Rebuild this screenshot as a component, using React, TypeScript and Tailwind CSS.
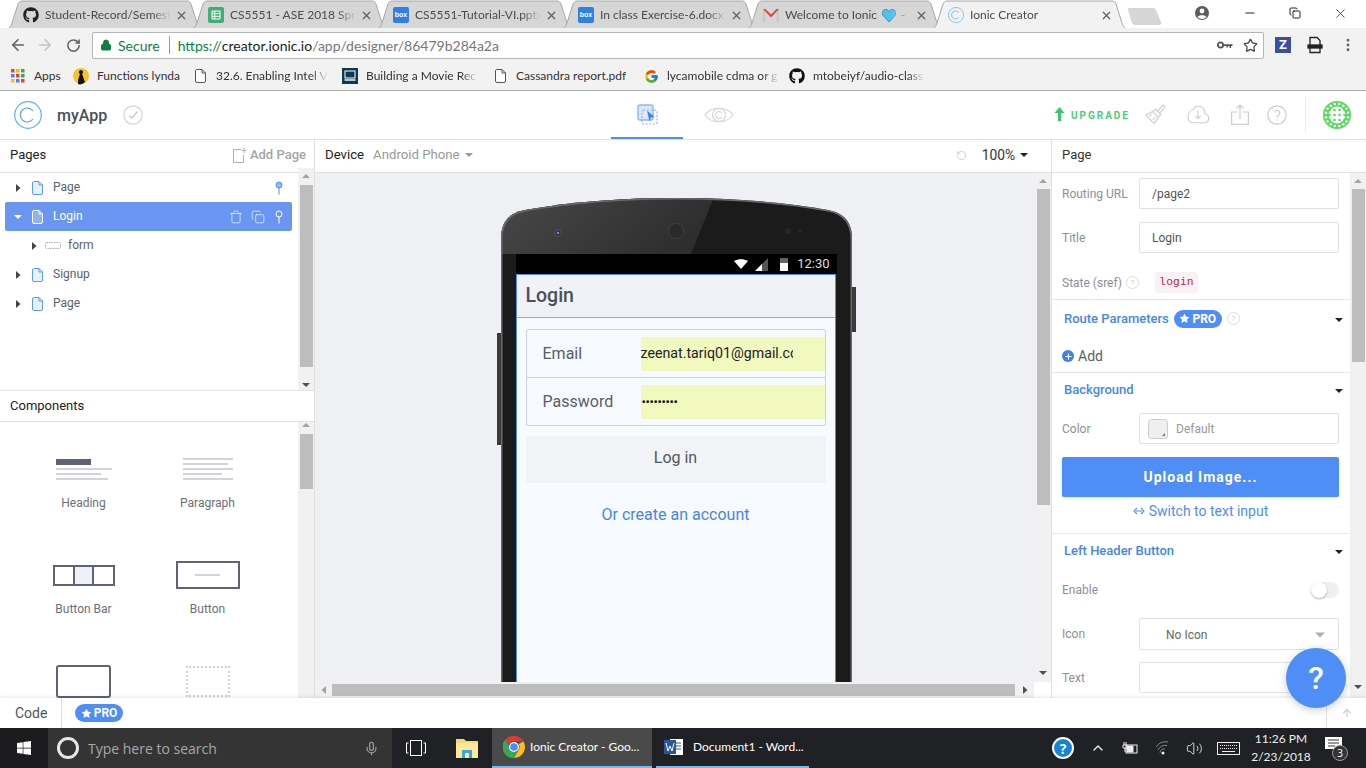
import React from "react";
import { ArrowLeft, ArrowRight, RotateCw, Lock, Star, X, Minus, Copy, MoreVertical, Trash, Mic, ChevronUp, Volume2, Plus, ArrowUp, RotateCcw } from "lucide-react";
import { FaGithub, FaWindows } from "react-icons/fa";
import { FcGoogle } from "react-icons/fc";

const Doc = ({ c = "#5b9af5", f = "#e6f0fe" }: { c?: string; f?: string }) => (
  <svg width="11" height="14" viewBox="0 0 11 14" fill={f} stroke={c} strokeWidth="1"><path d="M1.5 .5H7L10.5 4V12A1.5 1.5 0 0 1 9 13.5H2A1.5 1.5 0 0 1 .5 12V2A1.5 1.5 0 0 1 1.5 .5Z" /><path d="M7 .5V4H10.5" fill="none" /></svg>
);
const Tri = ({ d = "r", c = "#444", s = 8 }: { d?: string; c?: string; s?: number }) => (
  <svg width={s} height={s} viewBox="0 0 8 8" fill={c}>
    {d === "r" && <path d="M2 0L6.5 4L2 8Z" />}
    {d === "d" && <path d="M0 2H8L4 6Z" />}
    {d === "u" && <path d="M0 6H8L4 2Z" />}
    {d === "l" && <path d="M6 0L1.5 4L6 8Z" />}
  </svg>
);
const Pin = ({ c, f }: { c: string; f: string }) => (
  <svg width="8" height="14" viewBox="0 0 8 14" fill={f} stroke={c} strokeWidth="1"><circle cx="4" cy="4" r="3" /><path d="M4 7V13.5" /></svg>
);
const Help = ({ s = 13 }: { s?: number }) => (
  <span className="inline-flex items-center justify-center rounded-full border border-[#ddd] text-[#ccc] text-[8px] shrink-0" style={{ width: s, height: s }}>?</span>
);
const ProPill = () => (
  <span className="inline-flex items-center justify-center gap-[2px] w-[48px] h-[18px] rounded-full bg-[#4f8ef7] text-white text-[12px] font-bold"><Star size={11} fill="white" strokeWidth={0} />PRO</span>
);
const VScroll = ({ top, h, bot = 16, className = "" }: { top: number; h: number; bot?: number; className?: string }) => (
  <div className={`w-[16px] bg-[#f1f1f1] flex flex-col items-center shrink-0 ${className}`}>
    <div className="h-[16px] flex items-center justify-center shrink-0"><Tri d="u" c="#a3a3a3" /></div>
    <div className="w-[13px] bg-[#bdbdbd] shrink-0" style={{ marginTop: top, height: h }} />
    <div className="flex-1" />
    {bot > 0 && <div className="flex items-start justify-center shrink-0" style={{ height: bot }}><Tri d="d" c="#505050" /></div>}
  </div>
);

function BoxIcon() {
  return <span className="w-[16px] h-[16px] rounded-[2px] bg-[#2f7fe6] text-white text-[7px] font-bold flex items-center justify-center font-['Liberation_Sans',sans-serif]">box</span>;
}
const tabs = [
  { t: "Student-Record/Semest", i: <FaGithub size={16} color="#222" /> },
  { t: "CS5551 - ASE 2018 Spri", i: <svg width="16" height="16" viewBox="0 0 16 16"><rect width="16" height="16" rx="2" fill="#3fae78" /><path d="M4 4H12V12H4ZM4 6.6H12M4 9.3H12M6.8 4V12" fill="none" stroke="#fff" /></svg> },
  { t: "CS5551-Tutorial-VI.pptx", i: <BoxIcon /> },
  { t: "In class Exercise-6.docx", i: <BoxIcon /> },
  { t: "Welcome to Ionic", i: <svg width="16" height="14" viewBox="0 0 16 14"><path d="M0 1H2.5V14H0ZM13.5 1H16V14H13.5Z" fill="#c9c9c9" /><path d="M0 1H2.5L8 6.5L13.5 1H16L8 9.5Z" fill="#d9473b" /></svg> },
];
const IonicC = ({ s = 28 }: { s?: number }) => (
  <svg width={s} height={s} viewBox="0 0 28 28" fill="none"><circle cx="14" cy="14" r="13.3" stroke="#55b4f5" strokeWidth="1.2" /><path d="M19 10A7 7 0 1 0 19 18" stroke="#6a9ff0" strokeWidth="1.2" /></svg>
);
const TabShape = ({ w, f, s }: { w: number; f: string; s: string }) => (
  <svg className="absolute inset-0" width={w} height="29" viewBox={`0 0 ${w} 29`}>
    <path d={`M0 29C5 29 6 26 7 23L13 4C14 2 15 1 17 1H${w - 17}C${w - 15} 1 ${w - 14} 2 ${w - 13} 4L${w - 7} 23C${w - 6} 26 ${w - 5} 29 ${w} 29Z`} fill={f} stroke={s} />
  </svg>
);
const Tab = ({ t, i, active, heart, z }: { t: string; i: React.ReactNode; active?: boolean; heart?: boolean; z: number }) => (
  <div className="relative w-[199px] h-[29px] -mr-[14px] shrink-0" style={{ zIndex: z }}>
    <TabShape w={199} f={active ? "#f2f2f2" : "#d6d6d6"} s="#a8a8a8" />
    <div className="relative flex items-center h-[28px] pl-[18px] pr-[14px] pt-[2px]">
      <span className="w-[16px] h-[16px] flex items-center justify-center shrink-0">{i}</span>
      <span className="ml-[6px] w-[126px] whitespace-nowrap overflow-hidden text-[12px] text-[#4a4a4a] flex items-center [mask-image:linear-gradient(to_right,black_85%,transparent)]">
        {t}
        {heart && <svg className="mx-[5px] shrink-0" width="14" height="13" viewBox="0 0 14 13"><path d="M7 13L1 6.5C-1 3 2-1 5 .6C6 1 7 2.5 7 2.5S8 1 9 .6C12-1 15 3 13 6.5Z" fill="#4fc3f0" stroke="#1d6f8f" strokeWidth=".6" /></svg>}
        {heart && " -"}
      </span>
      <span className="flex-1" />
      <X size={13} color="#5f5f5f" strokeWidth={2.2} className="mr-[2px]" />
    </div>
  </div>
);

const bookmarks: [React.ReactNode, string, number, number][] = [
  [<svg width="14" height="14" viewBox="0 0 14 14">{[0, 1, 2].map((r) => [0, 1, 2].map((c) => <rect key={`${r}${c}`} x={c * 5} y={r * 5} width="3.5" height="3.5" fill={["#e94335", "#fbbc05", "#34a853", "#4285f4", "#e94335", "#34a853", "#fbbc05", "#4285f4", "#e94335"][r * 3 + c]} />))}</svg>, "Apps", 63, 0],
  [<svg width="16" height="18" viewBox="0 0 16 18"><circle cx="8" cy="9" r="8" fill="#f3c623" /><path d="M5 17C5 12 6 10 7 7C5 6 6 3 8 3C10 3 11 6 9 7C10 9 11 13 12 15C10 17 7 18 5 17Z" fill="#111" /></svg>, "Functions lynda", 119, 0],
  [<Doc c="#555" f="#fff" />, "32.6. Enabling Intel V", 150, 1],
  [<svg width="16" height="16" viewBox="0 0 16 16"><rect width="16" height="16" fill="#0e3a4f" /><rect x="3" y="3" width="10" height="7" fill="none" stroke="#fff" /><path d="M2.5 12H13.5" stroke="#fff" strokeWidth="1.4" /></svg>, "Building a Movie Rec", 150, 1],
  [<Doc c="#555" f="#fff" />, "Cassandra report.pdf", 151, 0],
  [<FcGoogle size={15} />, "lycamobile cdma or g", 146, 1],
  [<FaGithub size={16} color="#111" />, "mtobeiyf/audio-class", 136, 1],
];

const Row = ({ label, sel, ind, pin, icon }: { label: string; sel?: boolean; ind?: boolean; pin?: boolean; icon?: React.ReactNode }) => (
  <div className={`h-[29px] flex items-center rounded-[2px] text-[12px] ${sel ? "bg-[#6a96f2] text-white" : "text-[#5b6070]"}`}>
    <span className={`flex justify-center shrink-0 ${ind ? "w-[40px] pl-[18px]" : "w-[27px] pr-[2px]"}`}>
      <Tri d={sel ? "d" : "r"} c={sel ? "#fff" : "#444"} />
    </span>
    {icon ?? <Doc c={sel ? "#fff" : "#5b9af5"} f={sel ? "#8fb1f6" : "#e6f0fe"} />}
    <span className={`pb-[2px] ${ind ? "ml-[7px]" : "ml-[10px]"}`}>{label}</span>
    <span className="flex-1" />
    {sel && (
      <>
        <Trash size={14} color="#fff" strokeWidth={1.1} className="mr-[8px]" />
        <Copy size={14} color="#fff" strokeWidth={1.1} className="mr-[10px]" />
      </>
    )}
    {(pin || sel) && <span className="mr-[9px] flex"><Pin c={sel ? "#fff" : "#4f8ef7"} f={sel ? "transparent" : "#8fbaf8"} /></span>}
  </div>
);

const Comp = ({ label, children }: { label: string; children: React.ReactNode }) => (
  <div className="h-[106px] flex flex-col items-center">
    <div className="h-[44px] flex items-center justify-center">{children}</div>
    <div className="mt-[4px] text-[12px] text-[#6b6f7b] leading-[16px]">{label}</div>
  </div>
);

const Label = ({ children }: { children: React.ReactNode }) => <span className="w-[77px] shrink-0 text-[12px] text-[#8b8f98] whitespace-nowrap">{children}</span>;
const Input = ({ children, h = 31 }: { children?: React.ReactNode; h?: number }) => (
  <div className="w-[200px] border border-[#dde1e8] rounded-[2px] flex items-center pl-[12px] text-[12px] text-[#555] bg-white" style={{ height: h }}>{children}</div>
);
const SectionHead = ({ children, extra, h = 33 }: { children: React.ReactNode; extra?: React.ReactNode; h?: number }) => (
  <div className="flex items-center pl-[12px] pr-[7px]" style={{ height: h }}>
    <span className="text-[13px] font-medium text-[#4585f0]">{children}</span>
    {extra}
    <span className="flex-1" />
    <span className="mt-[3px] flex"><Tri d="d" c="#222" /></span>
  </div>
);

const PhoneShell = () => (
  <svg className="absolute left-0 top-0 overflow-visible" width="351" height="600" viewBox="0 0 351 600">
    <defs>
      <clipPath id="body"><path d="M0 600V42C0 25 8 16 24 13C75 4 125 1 175.5 1C226 1 276 4 327 13C343 16 351 25 351 42V600Z" /></clipPath>
      <linearGradient id="glare" x1="0" y1="0" x2="1" y2="0.3"><stop offset="0" stopColor="#484848" /><stop offset="1" stopColor="#2e2e2e" /></linearGradient>
    </defs>
    <rect x="-4" y="136" width="5" height="112" fill="#3a3a3a" />
    <rect x="350" y="90" width="5" height="45" fill="#3a3a3a" />
    <path d="M0 600V42C0 25 8 16 24 13C75 4 125 1 175.5 1C226 1 276 4 327 13C343 16 351 25 351 42V600Z" fill="#1b1b1b" />
    <g clipPath="url(#body)">
      <path d="M0 0H213L190 57H0Z" fill="url(#glare)" />
      <path d="M0 600V42C0 25 8 16 24 13C75 4 125 1 175.5 1C226 1 276 4 327 13C343 16 351 25 351 42V600" fill="none" stroke="#6a6a6a" strokeWidth="3" />
    </g>
    <circle cx="57" cy="36" r="3.5" fill="#2e2e50" stroke="#555" />
    <circle cx="57" cy="36" r="1.2" fill="#8a8ac8" />
    <circle cx="175" cy="34" r="7.5" fill="#2a2a2a" stroke="#555" strokeDasharray="1 1" />
    <circle cx="287" cy="34" r="3" fill="#262626" />
    <circle cx="299" cy="34" r="2" fill="#262626" />
  </svg>
);

const GreenLogo = () => {
  const dots: React.ReactNode[] = [];
  dots.push(<circle key="ring" cx="14" cy="14" r="11.2" fill="none" stroke="#55dc5c" strokeWidth="5.6" />);
  for (let i = 0; i < 16; i++) {
    const a = ((i + 0.5) / 16) * Math.PI * 2;
    dots.push(<circle key={i} cx={14 + Math.cos(a) * 11.2} cy={14 + Math.sin(a) * 11.2} r="1.3" fill="#fff" />);
  }
  for (let r = 0; r < 3; r++) for (let c = 0; c < 4; c++) dots.push(<circle key={`d${r}${c}`} cx={6.5 + c * 5} cy={9 + r * 5} r="1.3" fill="#55dc5c" />);
  return <svg width="28" height="28" viewBox="0 0 28 28">{dots}</svg>;
};

const ChromeIcon = ({ s = 22 }: { s?: number }) => (
  <svg width={s} height={s} viewBox="0 0 22 22">
    <path d="M11 0A11 11 0 0 1 20.5 5.5H11A5.5 5.5 0 0 0 6 8.5L2.5 3.5A11 11 0 0 1 11 0Z" fill="#e33b2e" />
    <path d="M20.5 5.5A11 11 0 0 1 11 22L15.7 13.8A5.5 5.5 0 0 0 15.7 8Z" fill="#fbc116" />
    <path d="M2.5 3.5L7 11.5A5 5 0 0 0 14.5 15L11 22A11 11 0 0 1 2.5 3.5Z" fill="#3aa757" />
    <circle cx="11" cy="11" r="5" fill="#fff" /><circle cx="11" cy="11" r="3.8" fill="#4b8bf5" />
  </svg>
);

export default function App() {
  return (
    <div className="w-[1366px] h-[768px] overflow-hidden flex flex-col bg-white font-['Roboto',sans-serif] relative">
      {/* tab strip */}
      <div className="h-[28px] bg-white flex shrink-0 relative font-['Lato',sans-serif]">
        <div className="absolute left-0 right-0 top-[28px] h-px bg-[#a8a8a8] z-0" />
        <div className="flex pl-[5px] relative z-10">
          {tabs.map((t, i) => (
            <Tab key={t.t} t={t.t} i={t.i} heart={i === 4} z={i + 1} />
          ))}
          <Tab t="Ionic Creator" i={<IonicC s={16} />} active z={9} />
          <div className="relative z-0 ml-[12px] mt-[6px]">
            <svg width="36" height="20" viewBox="0 0 36 20"><path d="M2 2H26Q28 2 29 4L34 16Q35 19 32 19H8Q6 19 5 17L1 4Q.5 2 2 2Z" fill="#d6d6d6" /></svg>
          </div>
        </div>
        <div className="flex-1" />
        <div className="flex items-center h-[28px] pb-[2px] relative z-10">
          <svg className="mr-[34px]" width="14" height="14" viewBox="0 0 14 14"><circle cx="7" cy="7" r="7" fill="#5c5c5c" /><circle cx="7" cy="5" r="2.4" fill="#fff" /><path d="M2.5 11C3.5 8.5 10.5 8.5 11.5 11A6 6 0 0 1 2.5 11Z" fill="#fff" /></svg>
          <Minus size={14} color="#222" className="mr-[32px]" />
          <Copy size={12} color="#222" className="mr-[32px]" />
          <X size={15} color="#222" strokeWidth={1.2} className="mr-[18px]" />
        </div>
      </div>
      {/* toolbar */}
      <div className="h-[34px] bg-[#f2f2f2] flex items-center shrink-0 relative z-20">
        <ArrowLeft size={18} color="#5f6368" className="ml-[9px]" strokeWidth={2.2} />
        <ArrowRight size={18} color="#c4c4c4" className="ml-[9px]" strokeWidth={2.2} />
        <RotateCw size={15} color="#5f6368" className="ml-[12px]" strokeWidth={2.4} />
        <div className="ml-[11px] w-[1172px] h-[27px] bg-white border border-[#b5b5b5] rounded-[2px] flex items-center text-[14px] font-['Lato',sans-serif]">
          <Lock size={12} color="#0b8043" fill="#0b8043" className="ml-[7px]" />
          <span className="ml-[6px] text-[#0b8043]">Secure</span>
          <span className="ml-[9px] w-px h-[18px] bg-[#999]" />
          <span className="ml-[8px] text-[#0b8043]">https://</span>
          <span className="text-[#222]">creator.ionic.io</span>
          <span className="text-[#777]">/app/designer/86479b284a2a</span>
          <span className="flex-1" />
          <svg className="mr-[10px]" width="16" height="8" viewBox="0 0 16 8" fill="none"><circle cx="3.5" cy="4" r="2.6" stroke="#555" strokeWidth="1.8" /><path d="M6 3.2H15.5V5H14V7H12.500V5H11V6.500H9.500V5H6Z" fill="#555" /></svg>
          <Star size={15} color="#444" className="mr-[5px]" />
        </div>
        <div className="ml-[11px] w-[16px] h-[16px] bg-[#3b4ea0] text-white text-[13px] font-bold flex items-center justify-center">Z</div>
        <svg className="ml-[16px]" width="16" height="18" viewBox="0 0 16 18" fill="none" stroke="#222" strokeWidth="1.3"><path d="M3 16.500V1.500H10L13 4.500V16.500Z" /><rect x="1" y="9" width="14" height="3" fill="#222" /></svg>
        <MoreVertical size={16} color="#666" className="ml-[17px]" strokeWidth={2.4} />
      </div>
      {/* bookmarks */}
      <div className="h-[28px] bg-[#f2f2f2] flex items-center shrink-0 pl-[10px] text-[12px] text-[#333] font-['Lato',sans-serif]">
        {bookmarks.map(([ic, t, w, fade]) => (
          <div key={t} className="flex items-center shrink-0" style={{ width: w }}>
            <span className="w-[16px] flex justify-center shrink-0">{ic}</span>
            <span className={`ml-[8px] whitespace-nowrap overflow-hidden ${fade ? "w-[112px] [mask-image:linear-gradient(to_right,black_85%,transparent)]" : ""}`}>{t}</span>
          </div>
        ))}
      </div>
      <div className="h-px bg-[#b0b0b0] shrink-0" />
      {/* app header */}
      <div className="h-[49px] border-b border-[#e0e0e0] flex items-center shrink-0 bg-white relative">
        <span className="ml-[14px] flex"><IonicC /></span>
        <span className="ml-[15px] pt-[2px] text-[16px] font-medium text-[#4a4f5c] w-[51px]">myApp</span>
        <svg className="ml-[15px]" width="20" height="20" viewBox="0 0 20 20" fill="none" stroke="#d4d4d4" strokeWidth="1.2"><circle cx="10" cy="10" r="9.2" /><path d="M6 10.5L9 13L14.5 6.5" stroke="#c4c4c4" /></svg>
        <div className="ml-[468px] w-[72px] h-[48px] border-b-2 border-[#4d8ef8] flex items-center justify-center">
          <svg width="21" height="21" viewBox="0 0 21 21"><rect x="1" y="1" width="15" height="15" rx="2" fill="#dbe8fd" stroke="#8fb6f6" strokeWidth="1.4" /><rect x="5" y="6" width="15" height="14" rx="1.500" fill="none" stroke="#8fb6f6" strokeWidth="1.2" strokeDasharray="2 1.500" /><path d="M10 6.500L17.500 13L14 13.500L12.500 17.500Z" fill="#3d84f2" /></svg>
        </div>
        <svg className="ml-[21px]" width="30" height="20" viewBox="0 0 30 20" fill="none" stroke="#d4d4d4" strokeWidth="1.1"><path d="M1 10C7 1 23 1 29 10C23 19 7 19 1 10Z" /><circle cx="15" cy="10" r="6.500" /><path d="M18 8A3.500 3.500 0 1 0 18 12" /></svg>
        <span className="flex-1" />
        <svg className="-mt-[2px]" width="11" height="14" viewBox="0 0 11 14" fill="#38c96a"><path d="M5.500 0L10.500 6H7V14H4V6H.5Z" /></svg>
        <span className="ml-[6px] text-[10px] font-bold tracking-[2px] text-[#45d07a]">UPGRADE</span>
        <svg className="ml-[14px] -mt-[2px]" width="23" height="22" viewBox="0 0 24 23" fill="none" stroke="#cdcdcd" strokeWidth="1.2"><path d="M14 9L19.500 2.500C20.500 1.500 22.500 3 21.500 4.500L16 11" /><path d="M12 6.500L17.500 12L15 15L9 9Z" /><path d="M9 9L2 12.500L10.500 21.500L15 15M6 14L8 11.500M9.500 18L11.500 15" /></svg>
        <svg className="ml-[19px] -mt-[3px]" width="24" height="21" viewBox="0 0 26 22" fill="none" stroke="#cdcdcd" strokeWidth="1.2"><path d="M7 21H20C26 21 26 12 20.500 11.500C21 3 10 0 8 7C1 7 0 21 7 21Z" /><path d="M13 8V16.500M10 13.500L13 16.500L16 13.500" /></svg>
        <svg className="ml-[21px] -mt-[2px]" width="18" height="21" viewBox="0 0 18 21" fill="none" stroke="#cdcdcd" strokeWidth="1.2"><path d="M6 8H.6V20.400H17.400V8H12" /><path d="M9 15V1M5.500 4.500L9 1L12.500 4.500" /></svg>
        <svg className="ml-[18px] -mt-[1px]" width="20" height="20" viewBox="0 0 20 20" fill="none" stroke="#cdcdcd" strokeWidth="1.2"><circle cx="10" cy="10" r="9.200" /><path d="M7.500 7.500C8 4.500 13 5 12.800 8C12.600 10 10 10 10 12.500M10 14.500V15.500" /></svg>
        <span className="ml-[18px] w-px h-[36px] bg-[#eee]" />
        <span className="ml-[17px] mr-[15px] flex"><GreenLogo /></span>
      </div>
      {/* main */}
      <div className="h-[558px] flex shrink-0 overflow-hidden">
        {/* left */}
        <div className="w-[315px] border-r border-[#e0e0e0] flex flex-col shrink-0">
          <div className="h-[33px] border-b border-[#e2e2e2] flex items-center pl-[10px] pr-[8px] pb-[2px] shrink-0">
            <span className="text-[13px] text-[#222]">Pages</span>
            <span className="flex-1" />
            <svg width="15" height="15" viewBox="0 0 15 15" fill="none" stroke="#b0b0b0"><path d="M9 1.500H1.500V14.500H11.500V7M12 0V5M9.500 2.500H14.500" /></svg>
            <span className="ml-[3px] text-[13px] font-medium text-[#a6a6a6]">Add Page</span>
          </div>
          <div className="h-[217px] flex shrink-0">
            <div className="w-[298px] pl-[5px] pr-[6px]">
              <Row label="Page" pin />
              <Row label="Login" sel />
              <Row label="form" ind icon={<svg width="16" height="7" viewBox="0 0 16 7" fill="none"><rect x=".5" y=".5" width="15" height="6" rx="1" stroke="#aaa" strokeDasharray="1.500 1" /></svg>} />
              <Row label="Signup" />
              <Row label="Page" />
            </div>
            <VScroll top={1} h={182} bot={9} className="-mt-[5px] relative z-10 h-[222px]" />
          </div>
          <div className="h-[32px] border-y border-[#e2e2e2] flex items-center pl-[10px] text-[13px] text-[#222] shrink-0 bg-white relative z-20">Components</div>
          <div className="h-[276px] flex overflow-hidden">
            <div className="w-[298px] overflow-hidden pl-[21px] pt-[25px] grid grid-cols-[125px_123px] content-start">
              <Comp label="Heading">
                <div className="w-[56px] flex flex-col gap-[3px]">
                  <div className="w-[35px] h-[6px] bg-[#5f6373]" />
                  <div className="h-[2px] bg-[#d3d4da]" />
                  <div className="w-[45px] h-[2px] bg-[#d3d4da]" />
                  <div className="w-[52px] h-[2px] bg-[#d3d4da]" />
                </div>
              </Comp>
              <Comp label="Paragraph">
                <div className="w-[50px] flex flex-col gap-[3px]">
                  <div className="h-[2px] bg-[#d3d4da]" />
                  <div className="w-[45px] h-[2px] bg-[#d3d4da]" />
                  <div className="h-[2px] bg-[#d3d4da]" />
                  <div className="w-[39px] h-[2px] bg-[#d3d4da]" />
                  <div className="h-[2px] bg-[#d3d4da]" />
                </div>
              </Comp>
              <Comp label="Button Bar">
                <div className="w-[62px] h-[21px] border-2 border-[#5f6373] flex">
                  <div className="flex-1" />
                  <div className="w-[21px] border-x-2 border-[#5f6373] bg-[#eef0f5]" />
                  <div className="flex-1" />
                </div>
              </Comp>
              <Comp label="Button">
                <div className="w-[64px] h-[28px] border-2 border-[#5f6373] flex items-center justify-center">
                  <div className="w-[25px] h-[2px] bg-[#d3d4da]" />
                </div>
              </Comp>
              <Comp label="Card">
                <div className="w-[55px] h-[33px] border-2 border-[#5f6373] rounded-[3px]" />
              </Comp>
              <Comp label="Container">
                <div className="w-[44px] h-[31px] border-2 border-dotted border-[#cfd0d6]" />
              </Comp>
            </div>
            <VScroll top={1} h={55} bot={0} className="-mt-[5px] relative z-10 h-[281px]" />
          </div>
        </div>
        {/* canvas */}
        <div className="w-[737px] border-r border-[#e0e0e0] flex flex-col shrink-0">
          <div className="h-[33px] border-b border-[#e2e2e2] flex items-center pl-[10px] pb-[2px] shrink-0 text-[13.2px]">
            <span className="text-[#222]">Device</span>
            <span className="ml-[9px] text-[#999]">Android Phone</span>
            <span className="ml-[5px] flex"><Tri d="d" c="#999" /></span>
            <span className="flex-1" />
            <RotateCcw size={11} color="#ccc" />
            <span className="ml-[15px] text-[13.8px] text-[#333]">100%</span>
            <span className="ml-[5px] mr-[23px] flex"><Tri d="d" c="#222" /></span>
          </div>
          <div className="flex-1 flex min-h-0">
            <div className="flex-1 bg-[#eff0f4] overflow-hidden flex justify-center pt-[24px] min-w-0">
              <div className="relative ml-[2px] w-[351px] h-[600px] shrink-0 pt-[57px] pl-[15px]">
                <PhoneShell />
                <div className="relative w-[321px]">
                  <div className="h-[20px] bg-black flex items-center justify-end pr-[7px] text-[#ddd] text-[13px]">
                    <svg width="14" height="10" viewBox="0 0 14 10"><path d="M0 2C4-.5 10-.5 14 2L7 10Z" fill="#fff" /></svg>
                    <svg className="ml-[7px]" width="13" height="13" viewBox="0 0 13 13"><path d="M13 0V13H0Z" fill="#555" /><path d="M7 6V13H0Z" fill="#fff" /></svg>
                    <svg className="ml-[12px]" width="8" height="14" viewBox="0 0 8 14"><rect y="1" width="8" height="13" fill="#666" /><rect y="6" width="8" height="8" fill="#fff" /></svg>
                    <span className="ml-[9px]">12:30</span>
                  </div>
                  <div className="w-[320px] h-[420px] border-t border-x border-[#4d8ef8] bg-[#f7faff]">
                    <div className="h-[43px] bg-[#f0f2f7] border-b border-[#a9abb2] flex items-center pl-[9px] text-[19.5px] font-medium text-[#4c4f58]">Login</div>
                    <div className="px-[9px] pt-[11px]">
                      <div className="h-[97px] border border-[#ced2da] rounded-[2px] flex flex-col text-[16px] text-[#5a5d66]">
                        <div className="h-[48px] border-b border-[#ced2da] flex items-center pl-[16px]">
                          <span className="w-[98px]">Email</span>
                          <div className="flex-1 h-[34px] bg-[#f1f9bf] flex items-center text-[#222] text-[14.2px]">
                            <span className="w-[152px] overflow-hidden whitespace-nowrap">zeenat.tariq01@gmail.com</span>
                          </div>
                        </div>
                        <div className="flex-1 flex items-center pl-[16px]">
                          <span className="w-[98px]">Password</span>
                          <div className="flex-1 h-[34px] bg-[#f1f9bf] flex items-center pl-[1px] text-[#111] text-[13px] tracking-[-0.4px] leading-none">•••••••••</div>
                        </div>
                      </div>
                      <div className="mt-[10px] h-[47px] pb-[3px] bg-[#f1f3f7] rounded-[3px] flex items-center justify-center text-[16px] text-[#53565f]">Log in</div>
                      <div className="mt-[20px] text-center text-[16px] text-[#4585f0]">Or create an account</div>
                    </div>
                  </div>
                </div>
              </div>
            </div>
            <VScroll top={0} h={316} bot={13} className="h-full w-[15px]" />
          </div>
          <div className="h-[16px] flex shrink-0">
            <div className="w-[719px] bg-[#f1f1f1] flex items-center">
              <span className="w-[17px] flex justify-center"><Tri d="l" c="#a3a3a3" /></span>
              <div className="w-[683px] h-[12px] bg-[#bdbdbd]" />
              <span className="flex-1 flex justify-end pr-[5px]"><Tri d="r" c="#505050" /></span>
            </div>
          </div>
        </div>
        {/* right */}
        <div className="flex-1 flex flex-col min-w-0">
          <div className="h-[33px] border-b border-[#e2e2e2] flex items-center pl-[10px] pb-[2px] text-[13px] text-[#333] shrink-0">Page</div>
          <div className="flex-1 flex min-h-0">
            <div className="w-[298px] overflow-hidden">
              <div className="h-[127px] border-b border-[#e8e8e8] pl-[10px] pt-[5px]">
                <div className="flex items-center"><Label>Routing URL</Label><Input>/page2</Input></div>
                <div className="flex items-center mt-[13px]"><Label>Title</Label><Input>Login</Input></div>
                <div className="flex items-center mt-[19px]">
                  <span className="w-[64px] text-[12px] text-[#8b8f98] whitespace-nowrap">State (sref)</span>
                  <Help />
                  <span className="ml-[16px] h-[21px] w-[43px] rounded-[3px] bg-[#f8f2f4] flex items-center justify-center text-[11.3px] text-[#c7254e] font-['DejaVu_Sans_Mono',monospace]">login</span>
                </div>
              </div>
              <div className="h-[73px] border-b border-[#e8e8e8]">
                <SectionHead h={37} extra={<><span className="ml-[5px] flex"><ProPill /></span><span className="ml-[5px] flex"><Help /></span></>}>Route Parameters</SectionHead>
                <div className="mt-[7px] pl-[10px] flex items-center h-[24px] text-[14px] text-[#5a5d66]">
                  <span className="w-[12px] h-[12px] rounded-full bg-[#3b82f0] flex items-center justify-center"><Plus size={9} color="white" strokeWidth={3} /></span>
                  <span className="ml-[4px]">Add</span>
                </div>
              </div>
              <div className="h-[161px] border-b border-[#e8e8e8]">
                <SectionHead>Background</SectionHead>
                <div className="pl-[10px] mt-[7px] flex items-center">
                  <Label>Color</Label>
                  <Input>
                    <svg className="-ml-[4px]" width="20" height="20" viewBox="0 0 20 20"><rect x=".5" y=".5" width="19" height="19" rx="3" fill="#efefef" stroke="#ccc" /><path d="M17 14V17H14Z" fill="#777" /></svg>
                    <span className="ml-[8px] text-[#999]">Default</span>
                  </Input>
                </div>
                <div className="ml-[10px] mt-[13px] w-[277px] h-[40px] rounded-[2px] bg-[#4f8ef7] shadow-sm flex items-center justify-center text-white text-[14px] font-bold tracking-[1px]">Upload Image...</div>
                <div className="h-[28px] flex items-center justify-center text-[14px] text-[#4f8ef7] -ml-[1px]">
                  <svg className="mr-[4px]" width="12" height="10" viewBox="0 0 12 10" fill="none" stroke="#4f8ef7" strokeWidth="1.1"><path d="M4 2L1 5L4 8M8 2L11 5L8 8M3 5H9" /></svg>Switch to text input
                </div>
              </div>
              <SectionHead>Left Header Button</SectionHead>
              <div className="pl-[10px] pr-[11px] mt-[15px] h-[16px] flex items-center">
                <Label>Enable</Label>
                <span className="flex-1" />
                <div className="w-[28px] h-[16px] rounded-full bg-[#eef0f4] flex items-center">
                  <span className="w-[16px] h-[16px] rounded-full bg-white shadow-[0_1px_2px_rgba(0,0,0,0.3)]" />
                </div>
              </div>
              <div className="pl-[10px] mt-[20px] flex items-center">
                <Label>Icon</Label>
                <div className="w-[200px] h-[32px] pt-[1px] border border-[#dde1e8] rounded-[2px] flex items-center pl-[26px] pr-[13px] text-[12px] text-[#666]">
                  No Icon<span className="flex-1" /><Tri d="d" c="#b0b0b0" s={10} />
                </div>
              </div>
              <div className="pl-[10px] mt-[12px] flex items-center"><Label>Text</Label><Input /></div>
            </div>
            <VScroll top={0} h={173} bot={15} className="h-full" />
          </div>
        </div>
      </div>
      {/* FAB */}
      <div className="absolute left-[1286px] top-[648px] w-[60px] h-[60px] rounded-full bg-[#4f8ef7] shadow-[0_2px_8px_rgba(0,0,0,0.2)] flex items-center justify-center text-white text-[32px] font-medium z-30">?</div>
      {/* code bar */}
      <div className="h-[30px] shrink-0 bg-white flex items-center shadow-[0_-1px_3px_rgba(0,0,0,0.1)] relative z-20">
        <span className="w-[62px] h-full border-r border-[#e0e0e0] flex items-center pl-[15px] text-[14px] text-[#555]">Code</span>
        <span className="ml-[13px] flex"><ProPill /></span>
        <span className="flex-1" />
        <span className="w-[40px] h-full border-l border-[#e0e0e0] flex items-center justify-center"><ArrowUp size={12} color="#c9d2dc" strokeWidth={2.5} /></span>
      </div>
      {/* taskbar */}
      <div className="h-[40px] shrink-0 bg-[#202124] flex items-stretch text-white font-['Open_Sans',sans-serif] relative z-10">
        <div className="w-[48px] bg-[#1c1c1f] flex items-center justify-center"><FaWindows size={16} color="#fff" /></div>
        <div className="w-[344px] bg-[#343434] flex items-center">
          <span className="ml-[9px] w-[22px] h-[22px] rounded-full border-[3px] border-[#e8e8e8]" />
          <span className="ml-[9px] text-[14px] text-[#a8a8a8]">Type here to search</span>
          <span className="flex-1" />
          <Mic size={15} color="#999" className="mr-[13px]" />
        </div>
        <div className="w-[100px] flex items-center">
          <svg className="ml-[14px]" width="20" height="16" viewBox="0 0 20 16" fill="none" stroke="#fff"><rect x="4.500" y=".5" width="11" height="15" /><path d="M2.500 3H.5V13H2.500M17.500 3H19.500V13H17.500" /></svg>
          <svg className="ml-[30px]" width="22" height="20" viewBox="0 0 22 20"><path d="M0 1H8L10 3H22V20H0Z" fill="#f6d776" /><rect x="0" y="5" width="22" height="15" fill="#fde89a" /><rect x="6" y="12" width="10" height="8" fill="#3aa6e0" /><rect x="9" y="15" width="4" height="5" fill="#fde89a" /></svg>
        </div>
        <div className="w-[160px] bg-[#4a4a4a] border-b-2 border-[#76b9ed] flex items-center pl-[11px] text-[12px] font-['Lato',sans-serif]">
          <ChromeIcon />
          <span className="ml-[5px] whitespace-nowrap">Ionic Creator - Goo...</span>
        </div>
        <div className="ml-[4px] w-[153px] border-b-2 border-[#76b9ed] flex items-center pl-[8px] text-[12px] font-['Lato',sans-serif]">
          <svg width="20" height="20" viewBox="0 0 20 20"><rect x="6" y="2" width="13" height="16" fill="#fff" /><path d="M9 6H17M9 9H17M9 12H17" stroke="#2b579a" /><rect y="3" width="12" height="14" fill="#2b579a" /><path d="M2 6L4 14L6 9L8 14L10 6" fill="none" stroke="#fff" /></svg>
          <span className="ml-[9px] whitespace-nowrap">Document1 - Word...</span>
        </div>
        <div className="flex-1 flex items-center">
          <span className="ml-[243px] w-[22px] h-[22px] rounded-full bg-[#1683d8] border-2 border-white flex items-center justify-center text-[14px] font-bold">?</span>
          <ChevronUp size={16} color="#eee" className="ml-[16px]" />
          <svg className="ml-[16px]" width="16" height="14" viewBox="0 0 16 14" fill="none" stroke="#eee"><rect x="4" y="4" width="11" height="8" /><rect x="5" y="5" width="6" height="6" fill="#eee" /><path d="M2 1V4M4 1V4M1 4H5V7H1ZM3 7V11" /></svg>
          <svg className="ml-[17px]" width="14" height="14" viewBox="0 0 14 14" fill="none" stroke="#888"><path d="M1 6A12 12 0 0 1 13 1M3 9A8 8 0 0 1 12 4.500M5 11.500A4 4 0 0 1 10 8" /><circle cx="8" cy="12" r="1.500" fill="#eee" stroke="none" /></svg>
          <Volume2 size={17} color="#eee" strokeWidth={1.2} className="ml-[17px]" />
          <svg className="ml-[14px]" width="23" height="13" viewBox="0 0 23 13" fill="none" stroke="#eee"><rect x=".5" y=".5" width="22" height="12" /><path d="M3 3.500H20M3 6.500H20" strokeDasharray="1 1" /><path d="M5 9.500H18" /></svg>
          <div className="ml-[11px] w-[60px] text-center text-[12px] font-['Lato',sans-serif] leading-[18px] whitespace-nowrap text-[#eee]"><div>11:26 PM</div><div>2/23/2018</div></div>
          <div className="ml-[14px] relative w-[24px] h-[24px] mt-[2px]">
            <svg width="17" height="16" viewBox="0 0 17 16"><path d="M0 0H17V12H11L9 15V12H0Z" fill="#fff" /><path d="M3 3H14M3 6H14M3 9H10" stroke="#333" /></svg>
            <span className="absolute left-[7px] top-[8px] w-[16px] h-[16px] rounded-full bg-[#333] border border-[#999] text-[10px] flex items-center justify-center">3</span>
          </div>
        </div>
      </div>
    </div>
  );
}
